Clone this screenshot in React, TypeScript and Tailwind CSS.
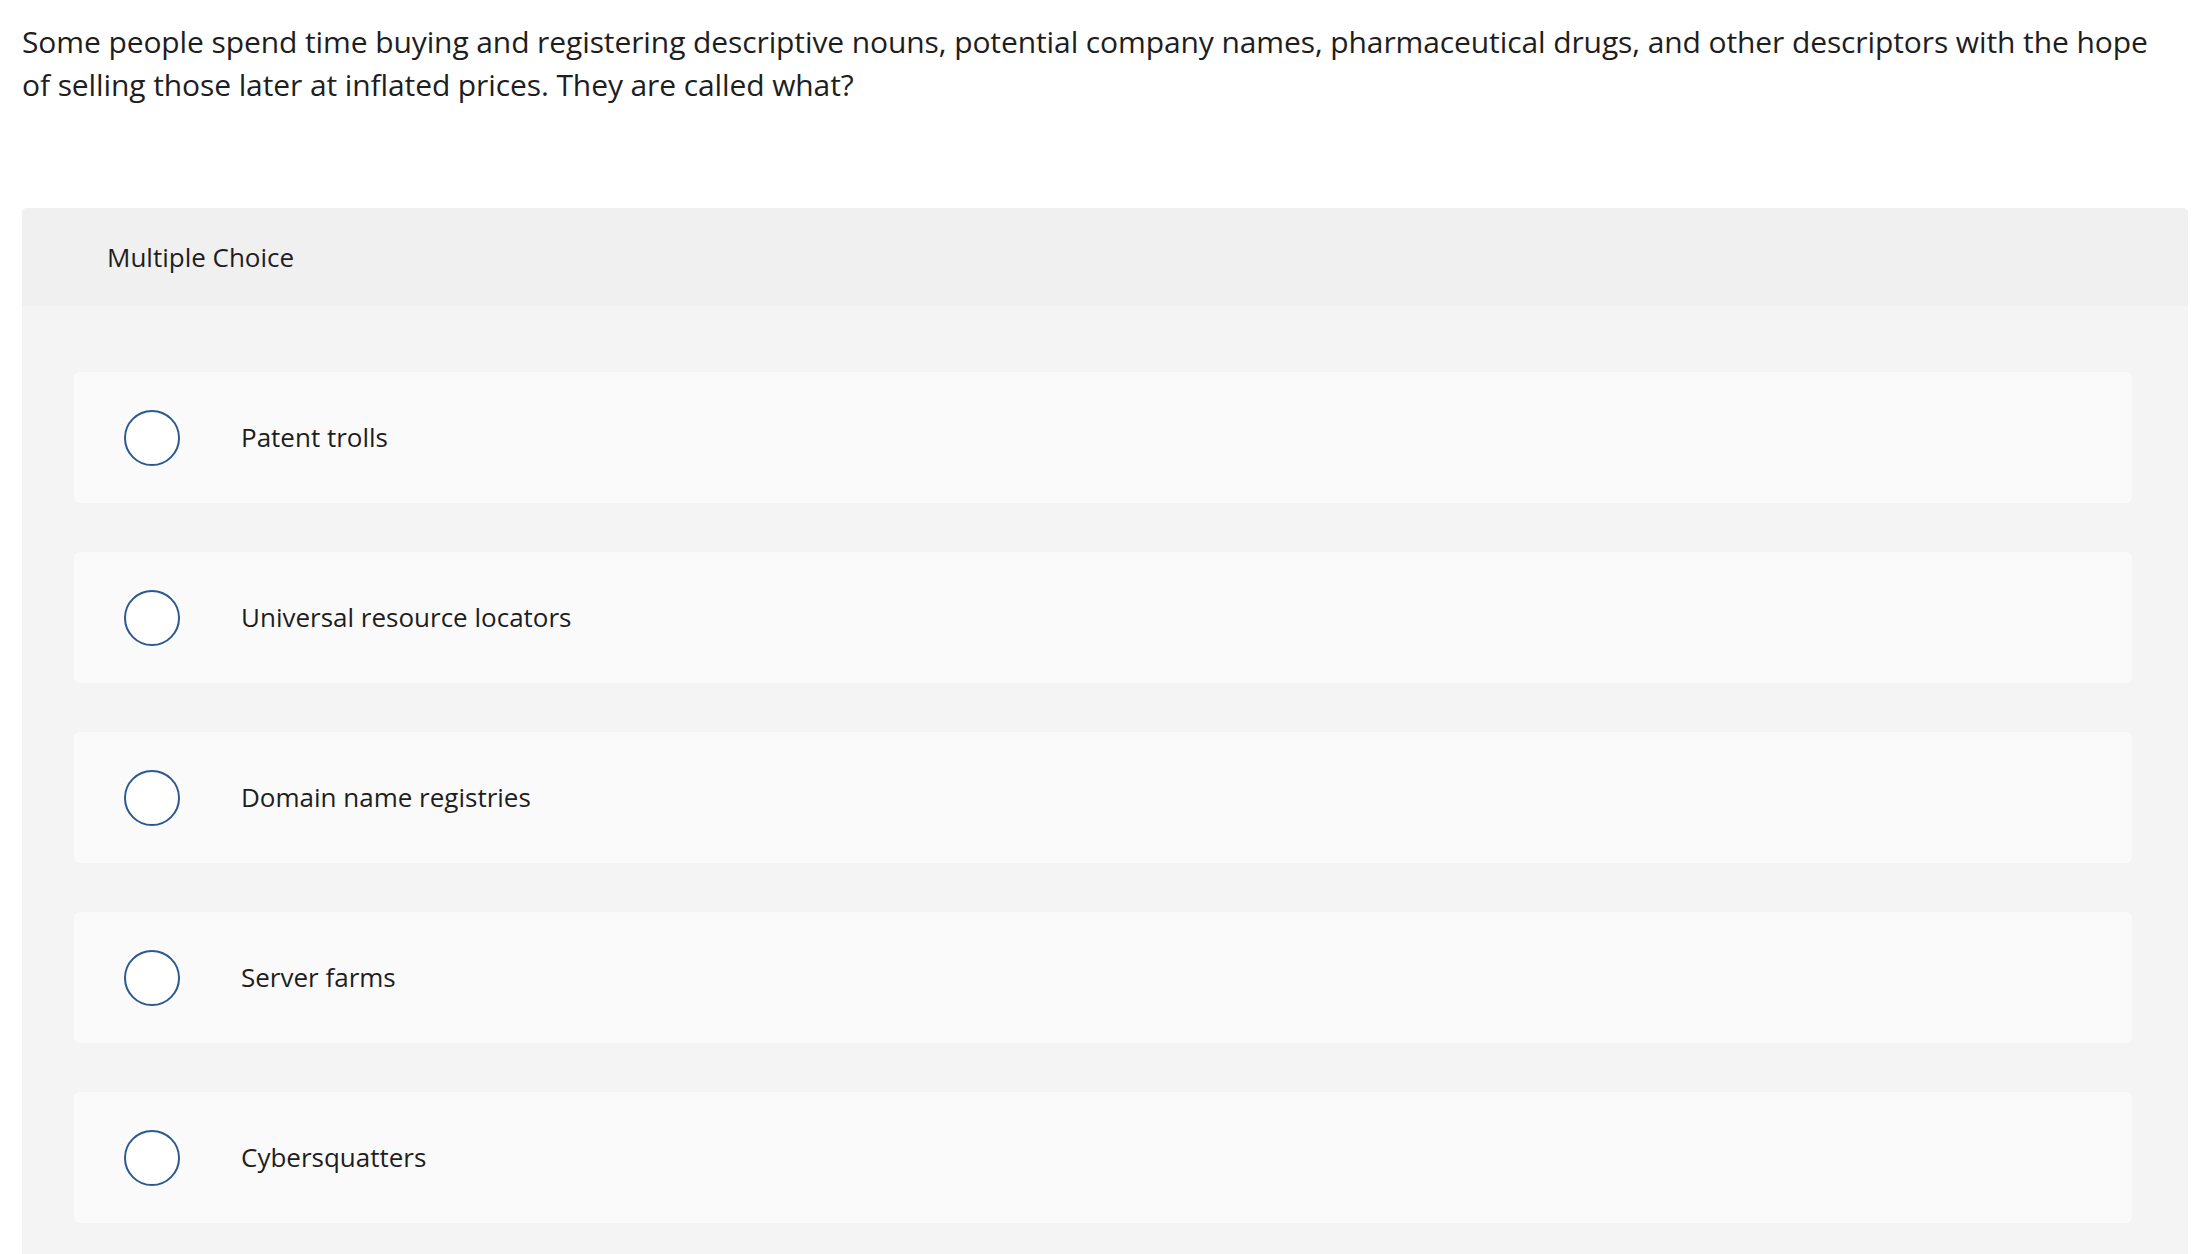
const options = [
  "Patent trolls",
  "Universal resource locators",
  "Domain name registries",
  "Server farms",
  "Cybersquatters",
];

function Radio() {
  return (
    <span className="block w-[56px] h-[56px] shrink-0 rounded-full border-[2.5px] border-[#2c5a8f] bg-white" />
  );
}

export default function App() {
  return (
    <div
      className="min-h-screen bg-white pl-[22px] pr-[14px] text-[#1e1e1e]"
      style={{ fontFamily: "'Open Sans', 'Liberation Sans', sans-serif" }}
    >
      {/* Question */}
      <p className="pt-[20px] pr-[6px] text-[30px] leading-[43px] tracking-[-0.1px]">
        Some people spend time buying and registering descriptive nouns, potential company names,
        pharmaceutical drugs, and other descriptors with the hope of selling those later at
        inflated prices. They are called what?
      </p>

      {/* Answer panel */}
      <div className="mt-[102px] rounded-t-[5px] overflow-hidden bg-[#f4f4f4]">
        <div className="h-[98px] bg-[#f0f0f0] flex items-center pl-[85px]">
          <span className="text-[26px]">Multiple Choice</span>
        </div>

        <div className="pl-[52px] pr-[56px] pt-[66px] pb-[40px] flex flex-col gap-[49px]">
          {options.map((label) => (
            <label
              key={label}
              className="h-[131px] rounded-[6px] bg-[#fafafa] flex items-center pl-[50px] cursor-pointer"
            >
              <Radio />
              <span className="ml-[61px] text-[26px]">{label}</span>
            </label>
          ))}
        </div>
      </div>
    </div>
  );
}
